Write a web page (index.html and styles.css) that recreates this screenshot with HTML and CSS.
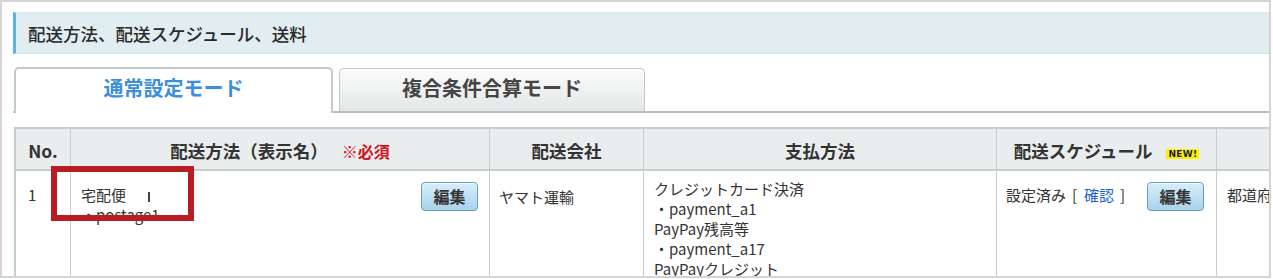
FILE: index.html
```html
<!DOCTYPE html>
<html lang="ja">
<head>
<meta charset="utf-8">
<title>配送方法、配送スケジュール、送料</title>
<link rel="stylesheet" href="styles.css">
</head>
<body>
<div class="frame">
  <div class="content">
    <div class="section-title">配送方法、配送スケジュール、送料</div>
    <div class="tabs">
      <div class="tab tab-active">通常設定モード</div>
      <div class="tab tab-inactive">複合条件合算モード</div>
    </div>
    <table class="ship-table">
      <thead>
        <tr>
          <th class="c-no">No.</th>
          <th class="c-method">配送方法（表示名）<span class="required">※必須</span></th>
          <th class="c-company">配送会社</th>
          <th class="c-pay">支払方法</th>
          <th class="c-sched">配送スケジュール<span class="new-badge">NEW!</span></th>
          <th class="c-fee"></th>
        </tr>
      </thead>
      <tbody>
        <tr>
          <td class="c-no">1</td>
          <td class="c-method">
            <div class="cell-row">
              <div class="cell-text">
                <div>宅配便<span class="caret"></span></div>
                <div>・postage1</div>
              </div>
              <button class="btn-edit" type="button">編集</button>
            </div>
          </td>
          <td class="c-company">ヤマト運輸</td>
          <td class="c-pay">
            <div>クレジットカード決済</div>
            <div>・payment_a1</div>
            <div>PayPay残高等</div>
            <div>・payment_a17</div>
            <div>PayPayクレジット</div>
          </td>
          <td class="c-sched">
            <div class="cell-row">
              <div class="cell-text">設定済み<span class="bracket">[</span><a class="link" href="#">確認</a><span class="bracket">]</span></div>
              <button class="btn-edit" type="button">編集</button>
            </div>
          </td>
          <td class="c-fee">都道府</td>
        </tr>
      </tbody>
    </table>
  </div>
  <div class="annotation-box"></div>
</div>
</body>
</html>
```

FILE: styles.css
```css
* { box-sizing: border-box; }

body {
  margin: 0;
  background: #ffffff;
  font-family: "Noto Sans CJK JP", "Noto Sans", sans-serif;
  color: #333333;
}

.frame {
  position: relative;
  width: 1271px;
  height: 278px;
  border: 2px solid #d5d3d3;
  overflow: hidden;
  background: #ffffff;
  padding: 10px 0 0 11px;
}

.content {
  width: 1400px;
}

.section-title {
  display: flex;
  align-items: center;
  height: 42px;
  background: #e2edf2;
  border-left: 3px solid #5ab4ea;
  border-top: 1px solid #d6ebee;
  border-bottom: 1px solid #c9e4e6;
  padding-left: 12px;
  font-size: 17.5px;
  font-weight: 500;
  color: #2a2a2a;
}

.tabs {
  display: flex;
  align-items: flex-end;
  gap: 6px;
  margin-top: 13px;
  padding-left: 1px;
  border-bottom: 2px solid #b9c1c1;
}

.tab {
  text-align: center;
  font-size: 20px;
  font-weight: bold;
  line-height: 28px;
  padding-top: 5px;
  border-radius: 5px 5px 0 0;
}

.tab-active {
  width: 319px;
  height: 46px;
  margin-bottom: -2px;
  background: #ffffff;
  border: 2px solid #c3caca;
  border-bottom: none;
  color: #3b8fdb;
}

.tab-inactive {
  width: 306px;
  height: 43px;
  background: linear-gradient(#fbfbfb, #e4e7e7);
  border: 1px solid #c0c7c7;
  border-bottom: none;
  padding-top: 5px;
  color: #454545;
}

.ship-table {
  margin-top: 14px;
  margin-left: 1px;
  table-layout: fixed;
  width: 1403px;
  border-collapse: separate;
  border-spacing: 0;
  border-top: 2px solid #c6cdcd;
  border-left: 2px solid #c6cdcd;
}

.ship-table th {
  height: 42px;
  background: #e9edee;
  border-right: 1px solid #c6cdcd;
  border-bottom: 2px solid #c6cdcd;
  font-size: 17.5px;
  font-weight: bold;
  color: #333333;
  text-align: center;
  vertical-align: middle;
  padding: 2px 0 0 0;
  white-space: nowrap;
}

.ship-table td {
  height: 130px;
  border-right: 1px solid #c6cdcd;
  vertical-align: top;
  font-size: 15px;
  line-height: 20px;
  color: #333333;
  padding: 14px 10px 0 10px;
  white-space: nowrap;
}

.c-no { width: 55px; }
.c-method { width: 419px; }
.c-company { width: 154px; }
.c-pay { width: 353px; }
.c-sched { width: 220px; }
.c-fee { width: 200px; }

.ship-table td.c-no { padding-left: 12px; }
.ship-table td.c-method { padding: 11px 11px 0 10px; }
.ship-table td.c-company { padding-top: 16px; padding-left: 9px; }
.ship-table td.c-pay { padding-top: 8px; }
.ship-table td.c-sched { padding: 11px 12px 0 9px; }

.required {
  margin-left: 14px;
  color: #d0141d;
  font-size: 16px;
}

.new-badge {
  display: inline-block;
  margin-left: 14px;
  padding: 0 2px;
  background: #fff000;
  color: #1d1d3a;
  font-family: "DejaVu Sans", sans-serif;
  font-size: 9px;
  font-weight: bold;
  letter-spacing: 0.3px;
  line-height: 10px;
  vertical-align: 1px;
}

.cell-row {
  display: flex;
  justify-content: space-between;
  align-items: flex-start;
}

.cell-text {
  padding-top: 3px;
}

.caret {
  display: inline-block;
  width: 2px;
  height: 10px;
  margin-left: 22px;
  background: #444444;
  vertical-align: -1px;
}

.bracket {
  margin: 0 7px 0 6px;
}

.link {
  color: #1a5fcf;
  text-decoration: none;
}

.btn-edit {
  width: 57px;
  height: 29px;
  padding: 0;
  border: 1px solid #6a9cc2;
  border-radius: 4px;
  background: linear-gradient(#d9eef9, #a9d2ec);
  box-shadow: inset 0 1px 0 #eef8fd;
  font-family: "Noto Sans CJK JP", sans-serif;
  font-size: 16px;
  font-weight: bold;
  line-height: 27px;
  color: #333333;
}

.annotation-box {
  position: absolute;
  left: 49px;
  top: 164px;
  width: 143px;
  height: 55px;
  border: 6px solid #b91c22;
}
```
